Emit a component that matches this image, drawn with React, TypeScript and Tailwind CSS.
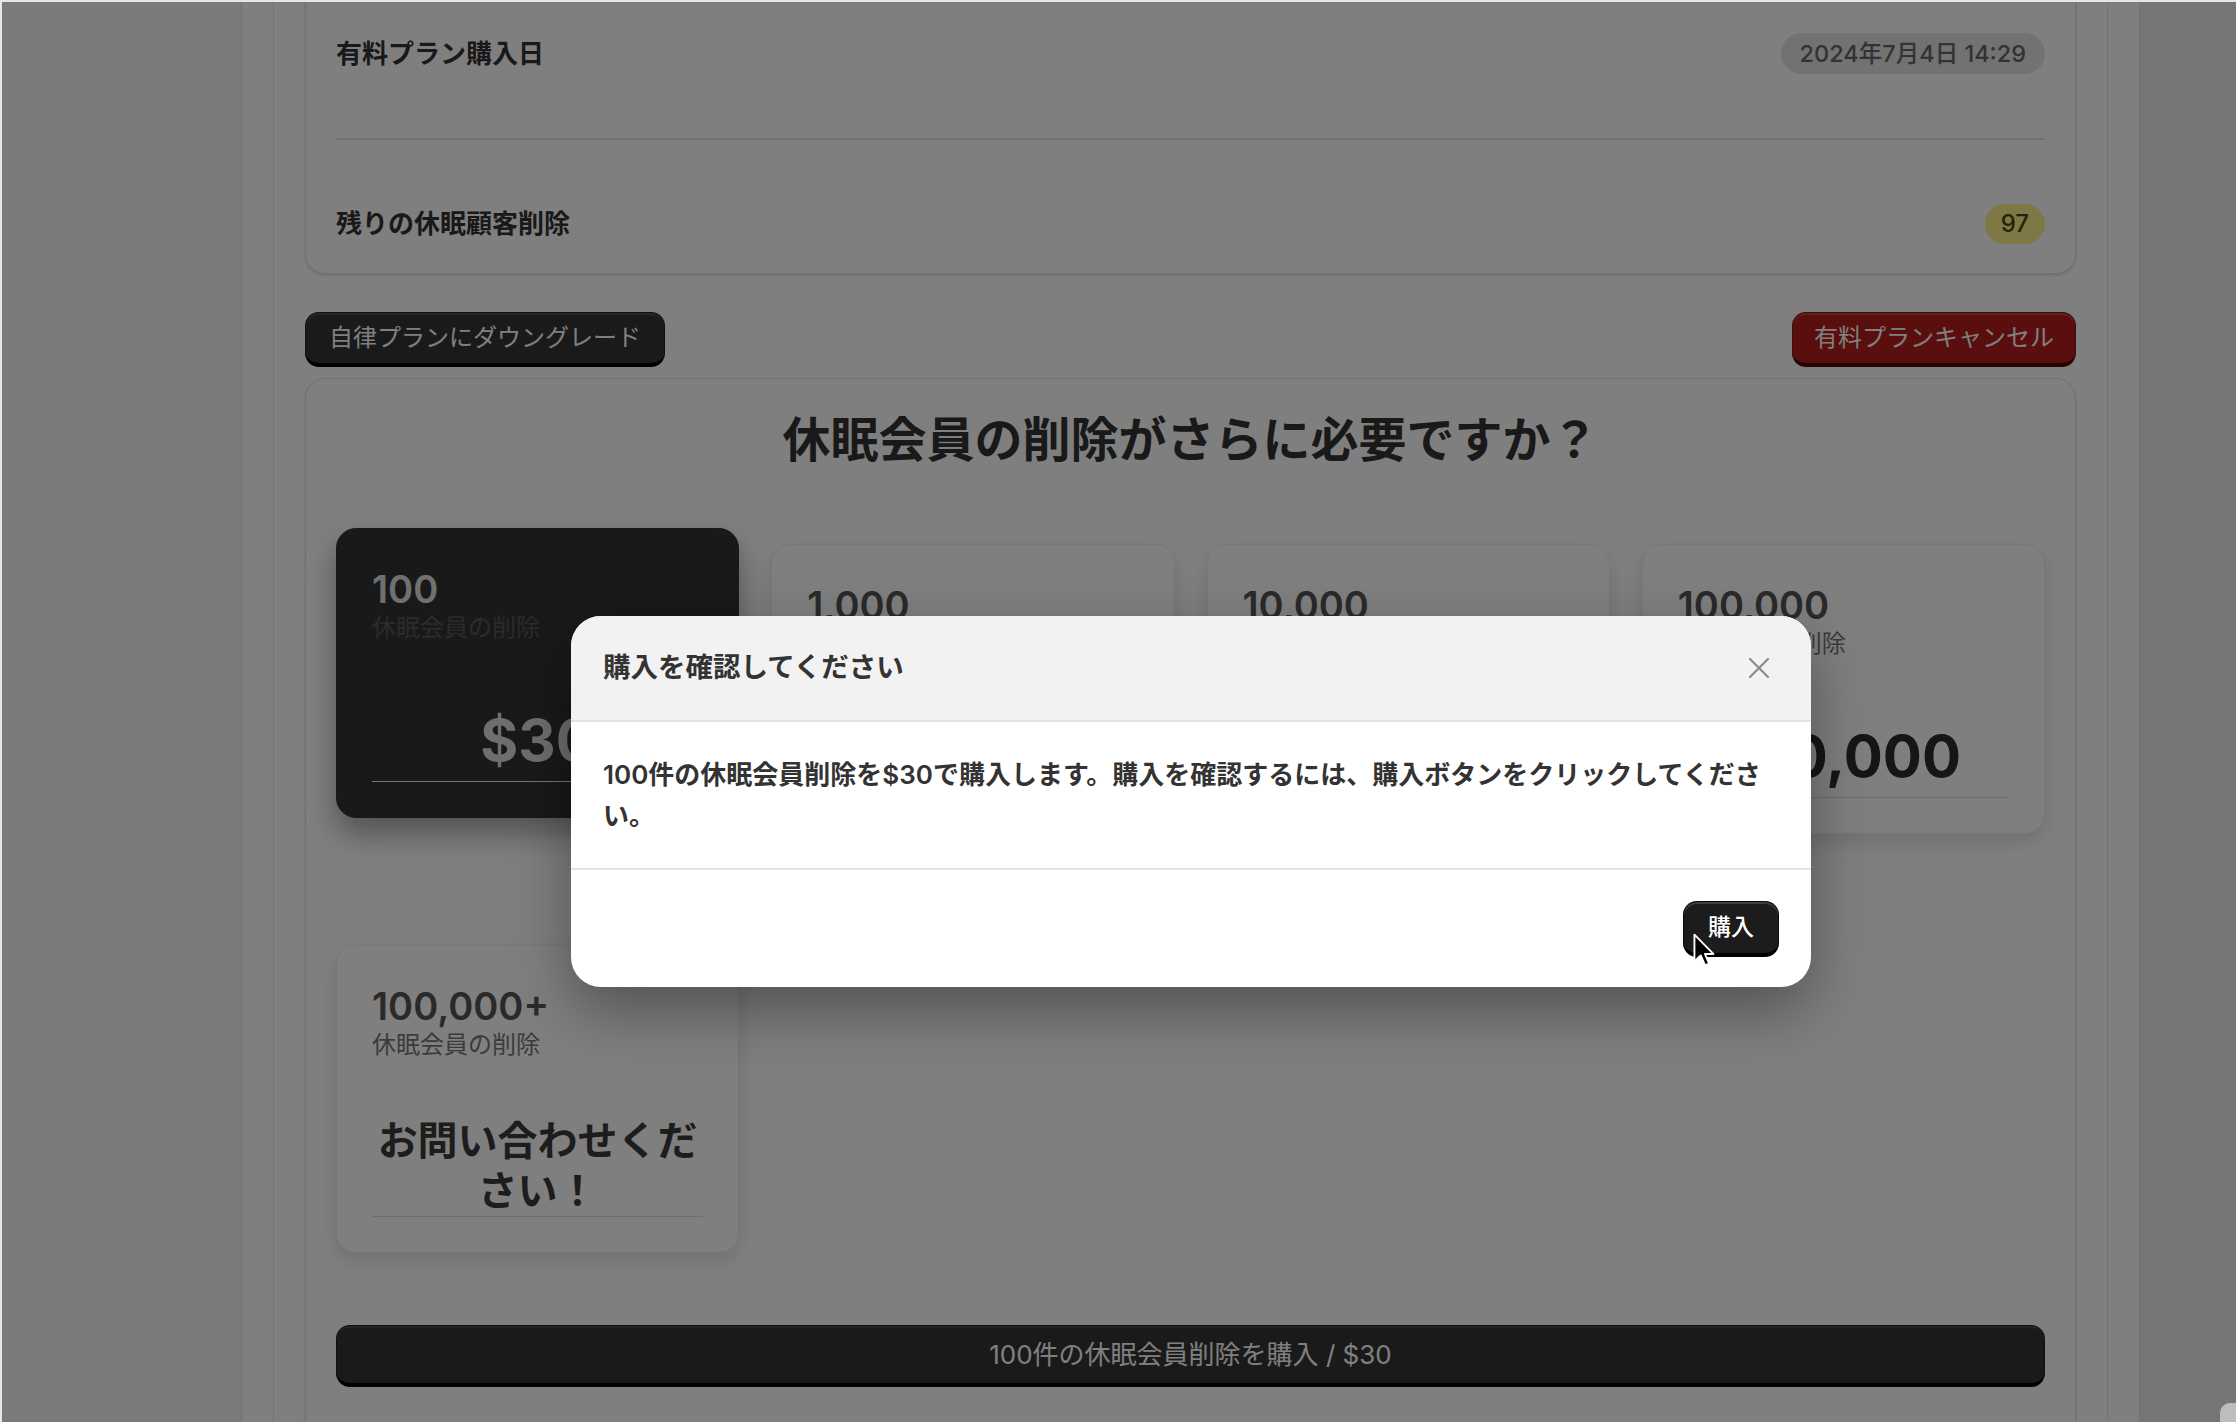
import React from "react";

type Plan = { count: string; price: string; selected?: boolean; contact?: boolean };

const plans: Plan[] = [
  { count: "100", price: "$30", selected: true },
  { count: "1,000", price: "$250" },
  { count: "10,000", price: "$2,000" },
  { count: "100,000", price: "$10,000" },
  { count: "100,000+", price: "お問い合わせください！", contact: true },
];

function PlanCard({ plan }: { plan: Plan }) {
  const sel = !!plan.selected;
  return (
    <div
      className={
        sel
          ? "-translate-y-[16px] rounded-[20px] border border-[#333333] bg-[#333333] p-[35px] shadow-[0_16px_30px_rgba(0,0,0,0.35)]"
          : "rounded-[20px] border border-[#efefef] bg-white p-[35px] shadow-[0_8px_20px_rgba(0,0,0,0.12)]"
      }
    >
      <div
        className={
          sel
            ? "text-[38px] font-semibold leading-[50px] text-[#e0e0e0]"
            : "text-[38px] font-semibold leading-[50px] text-[#555555]"
        }
      >
        {plan.count}
      </div>
      <div
        className={
          sel
            ? "text-[24px] leading-[28px] text-[#575757]"
            : "text-[24px] leading-[28px] text-[#777777]"
        }
      >
        休眠会員の削除
      </div>
      {plan.contact ? (
        <div className="mt-[57px] border-b border-[#dcdcdc] text-center text-[40px] font-bold leading-[50px] text-[#3a3a3a]">
          {plan.price}
        </div>
      ) : (
        <div
          className={
            sel
              ? "mt-[57px] border-b border-[#ededed] text-center text-[58px] font-bold leading-[82px] text-[#dddddd]"
              : "mt-[57px] border-b border-[#dcdcdc] text-center text-[58px] font-bold leading-[82px] text-[#2c2c2c]"
          }
        >
          {plan.price}
        </div>
      )}
    </div>
  );
}

function Cursor() {
  return (
    <svg
      width="23"
      height="35"
      viewBox="0 0 16 24"
      className="absolute left-[1691px] top-[931px]"
    >
      <path
        d="M1 1 L1 19.5 L5.4 15.4 L8.4 22.4 L11.2 21.2 L8.3 14.4 L14.2 14.4 Z"
        fill="#000"
        stroke="#fff"
        strokeWidth="1.3"
        strokeLinejoin="round"
      />
    </svg>
  );
}

export default function App() {
  return (
    <div className="relative h-[1422px] w-[2236px] overflow-hidden bg-[#e6e6e6] pl-[2px] pt-[2px] font-['Inter','Noto_Sans_CJK_JP',sans-serif] text-[#333333]">
      <div className="relative flex h-[1420px] w-[2234px] overflow-hidden">
        <div className="w-[239px] shrink-0 bg-[#f4f4f4]" />
        <main className="w-[1899px] shrink-0 border-x border-[#e4e4e4] bg-white px-[31px]">
          <div className="flow-root h-full border-x border-[#e4e4e4] px-[31px]">
            {/* info card */}
            <div className="-mt-[100px] rounded-[20px] border border-[#e0e0e0] bg-white px-[30px] shadow-[0_2px_3px_rgba(0,0,0,0.12)]">
              <div className="flex items-center justify-between border-b-2 border-[#e0e0e0] pb-[64px] pt-[130px]">
                <span className="text-[26px] font-bold leading-[41px]">有料プラン購入日</span>
                <span className="flex h-[41px] items-center rounded-full bg-[#e4e4e4] px-[19px] text-[23.5px] font-medium text-[#666666]">
                  2024年7月4日 14:29
                </span>
              </div>
              <div className="flex items-center justify-between pb-[29px] pt-[64px]">
                <span className="text-[26px] font-bold leading-[40px]">残りの休眠顧客削除</span>
                <span className="flex h-[40px] items-center rounded-full bg-[#fcef8c] px-[16px] text-[24px] font-medium text-[#4d4510]">
                  97
                </span>
              </div>
            </div>

            {/* action buttons */}
            <div className="mt-[38px] flex items-center justify-between">
              <button className="flex h-[55px] items-center rounded-[14px] border border-[#1e1e1e] border-b-[4px] border-b-black bg-[#343434] px-[23px] text-[24px] text-white shadow-[inset_0_2px_0_rgba(255,255,255,0.12)]">
                自律プランにダウングレード
              </button>
              <button className="flex h-[55px] items-center rounded-[14px] border border-[#801515] border-b-[4px] border-b-[#4a0808] bg-[#b41d1d] px-[21px] text-[24px] text-white shadow-[inset_0_2px_0_rgba(255,255,255,0.18)]">
                有料プランキャンセル
              </button>
            </div>

            {/* purchase section */}
            <div className="mt-[11px] rounded-[20px] border border-[#e0e0e0] bg-white px-[30px] pb-[120px] pt-[28px] shadow-[0_2px_3px_rgba(0,0,0,0.1)]">
              <h2 className="text-center text-[48px] font-bold leading-[66px] text-[#333333]">
                休眠会員の削除がさらに必要ですか？
              </h2>
              <div className="mt-[71px] grid grid-cols-4 items-start gap-x-[32px] gap-y-[111px]">
                {plans.map((p) => (
                  <PlanCard key={p.count} plan={p} />
                ))}
              </div>
              <button className="mt-[72px] flex h-[62px] w-full items-center justify-center rounded-[14px] border border-[#1e1e1e] border-b-[4px] border-b-black bg-[#343434] text-[26px] text-white shadow-[inset_0_2px_0_rgba(255,255,255,0.1)]">
                100件の休眠会員削除を購入 / $30
              </button>
            </div>
          </div>
        </main>
        <div className="flex-1 bg-[#ececec]" />

        {/* overlay */}
        <div className="absolute inset-0 bg-black/50" />

        {/* modal */}
        <div className="absolute left-[569px] top-[614px] w-[1240px] overflow-hidden rounded-[30px] bg-white shadow-[0_24px_60px_rgba(0,0,0,0.35)]">
          <div className="flex h-[106px] items-center justify-between border-b-2 border-[#e4e4e4] bg-[#f2f2f2] pl-[32px] pr-[41px]">
            <h3 className="text-[27.5px] font-semibold text-[#333333]">購入を確認してください</h3>
            <svg width="22" height="22" viewBox="0 0 22 22">
              <path d="M2 2 L20 20 M20 2 L2 20" stroke="#8a8a8a" strokeWidth="2.2" strokeLinecap="round" />
            </svg>
          </div>
          <div className="px-[32px] py-[32px] text-[26px] font-semibold leading-[41px] text-[#333333]">
            100件の休眠会員削除を$30で購入します。購入を確認するには、購入ボタンをクリックしてくださ
            <br />
            い。
          </div>
          <div className="flex h-[119px] items-center justify-end border-t-2 border-[#e4e4e4] px-[32px]">
            <button className="flex h-[56px] items-center rounded-[14px] border border-[#0a0a0a] border-b-[4px] border-b-black bg-[#1c1c1c] px-[24px] text-[23px] font-medium text-white shadow-[inset_0_2px_0_rgba(255,255,255,0.15)]">
              購入
            </button>
          </div>
        </div>

        <Cursor />
      </div>
      <div className="absolute left-[2220px] top-[1403px] h-[40px] w-[40px] rounded-[10px] bg-[#bdbdbd]" />
    </div>
  );
}
